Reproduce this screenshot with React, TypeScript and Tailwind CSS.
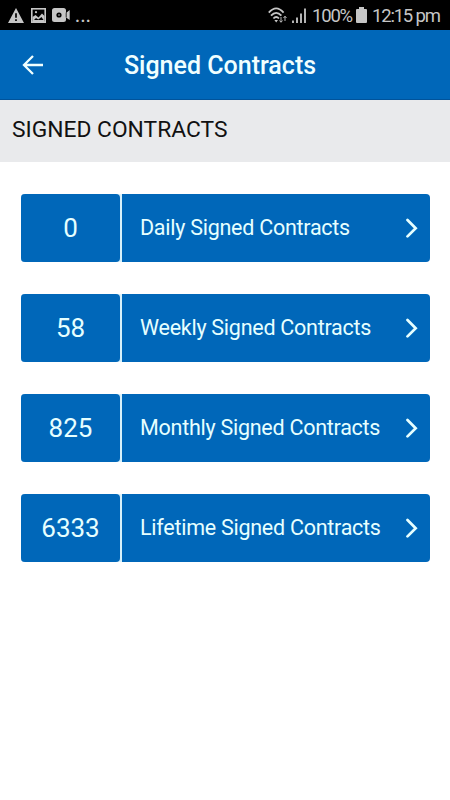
import React from 'react';

interface ContractRow {
  count: number;
  label: string;
}

const rows: ContractRow[] = [
  { count: 0, label: 'Daily Signed Contracts' },
  { count: 58, label: 'Weekly Signed Contracts' },
  { count: 825, label: 'Monthly Signed Contracts' },
  { count: 6333, label: 'Lifetime Signed Contracts' },
];

function StatusBar() {
  return (
    <div className="flex h-[30px] items-center justify-between bg-black pl-2 pr-[10px] text-[#c6c6c6]">
      <div className="flex items-center">
        <svg width="16" height="15" viewBox="0 0 16 15">
          <path d="M8 0 16 15H0Z" fill="currentColor" />
          <path d="M8 5.2v4.6M8 11.3v1.8" stroke="#000" strokeWidth="1.7" />
        </svg>
        <svg className="ml-[7px]" width="15" height="15" viewBox="0 0 15 15">
          <rect x="0.8" y="0.8" width="13.4" height="13.4" fill="none" stroke="currentColor" strokeWidth="1.6" />
          <path d="M1.5 9 4.5 7l3 2.5L11 5.5l2.5 2.5V14h-12z" fill="currentColor" />
          <path d="m3 12 2-2 2.3 1.5L10.5 9l2 3z" fill="#000" />
          <circle cx="5" cy="4.2" r="1.1" fill="currentColor" />
        </svg>
        <svg className="ml-[6px]" width="18" height="14" viewBox="0 0 18 14">
          <path d="M2.5 0h9A2.5 2.5 0 0 1 14 2.5V5l3.7-3v10L14 9.5v2a2.5 2.5 0 0 1-2.5 2.5h-9A2.5 2.5 0 0 1 0 11.5v-9A2.5 2.5 0 0 1 2.5 0Z" fill="currentColor" />
          <circle cx="7" cy="7" r="2.6" fill="#000" />
          <circle cx="7" cy="7" r="0.8" fill="currentColor" />
          <path d="M14.2 4.5v5" stroke="#000" strokeWidth="0.8" />
        </svg>
        <span className="ml-[5px] pt-px text-[18px] font-medium leading-[30px] tracking-[0.4px]">...</span>
      </div>

      <div className="flex items-center">
        <svg width="20" height="17" viewBox="0 0 20 17">
          <g fill="none" stroke="currentColor" strokeWidth="1.8">
            <path d="M0.8 5.7Q8.2-2.8 15.6 5.7" />
            <path d="M3 8.7q5.2-5.6 10.4 0" />
            <path d="M5.4 11.5q2.8-3 5.6 0" />
          </g>
          <path d="M6.4 13h3.6L8.2 15.5z" fill="currentColor" />
          <path d="M13 10v5M11.5 13.5l1.5 1.8 1.5-1.8M17 14V9.5M15.5 11l1.5-1.8L18.5 11" fill="none" stroke="currentColor" strokeWidth="0.9" />
        </svg>
        <svg className="ml-[3px]" width="16" height="15" viewBox="0 0 16 15">
          <path d="M2 12.5V15M6 9.5V15M10 5.5V15M14 0.5V15" stroke="currentColor" strokeWidth="1.8" />
        </svg>
        <span className="ml-[5px] w-[39px] whitespace-nowrap pt-px text-[18.5px] leading-[30px] tracking-[-1.2px]">100%</span>
        <svg className="ml-[5px]" width="11" height="16" viewBox="0 0 11 16">
          <path d="M3 0h5v2h2a1 1 0 0 1 1 1v12a1 1 0 0 1-1 1H1a1 1 0 0 1-1-1V3a1 1 0 0 1 1-1h2z" fill="currentColor" />
        </svg>
        <span className="ml-[5px] w-[68px] whitespace-nowrap pt-px text-[18.5px] leading-[30px] tracking-[-1.2px]">12:15 pm</span>
      </div>
    </div>
  );
}

function Header() {
  return (
    <header className="grid h-[70px] grid-cols-[60px_1fr_70px] items-center border-b border-[#00539b] bg-[#0067b9] text-[#f0ffff]">
      <button className="pl-[22px]" aria-label="Back">
        <svg width="22" height="20" viewBox="0 0 22 20" fill="none" stroke="currentColor" strokeWidth="2.3">
          <path d="M21 10H2M11 1 2 10l9 9" />
        </svg>
      </button>
      <h1 className="whitespace-nowrap pt-[2px] text-center text-[25px] font-medium leading-[30px]">Signed Contracts</h1>
    </header>
  );
}

function ContractButton({ count, label }: ContractRow) {
  return (
    <button className="flex h-[68px] w-full items-stretch overflow-hidden rounded-[4px] bg-[#0067b9] text-[#e6ffff]">
      <span className="flex w-[101px] bg-[#d8f1fa] pr-[2px]">
        <span className="flex flex-1 items-center justify-center rounded-r-[4px] bg-[#0067b9] text-[26px]">
          {count}
        </span>
      </span>
      <span className="flex flex-1 items-center justify-between pl-[18px] pr-[12px]">
        <span className="whitespace-nowrap text-[21.5px] tracking-[-0.26px]">{label}</span>
        <svg width="13" height="20" viewBox="0 0 13 20" fill="none" stroke="currentColor" strokeWidth="2.7" strokeLinecap="round">
          <path d="m2.5 2 8.2 8.2-8.2 8.2" />
        </svg>
      </span>
    </button>
  );
}

export default function App() {
  return (
    <div className="min-h-[800px] w-[450px] bg-white font-['Roboto',sans-serif]">
      <StatusBar />
      <Header />
      <div className="h-[62px] bg-[#e9eaec] pl-[12px] pt-[15px]">
        <h2 className="whitespace-nowrap text-[22.8px] leading-[30px] text-[#111111]">SIGNED CONTRACTS</h2>
      </div>
      <main className="flex flex-col gap-8 pl-[21px] pr-5 pt-8">
        {rows.map((row) => (
          <ContractButton key={row.label} count={row.count} label={row.label} />
        ))}
      </main>
    </div>
  );
}
